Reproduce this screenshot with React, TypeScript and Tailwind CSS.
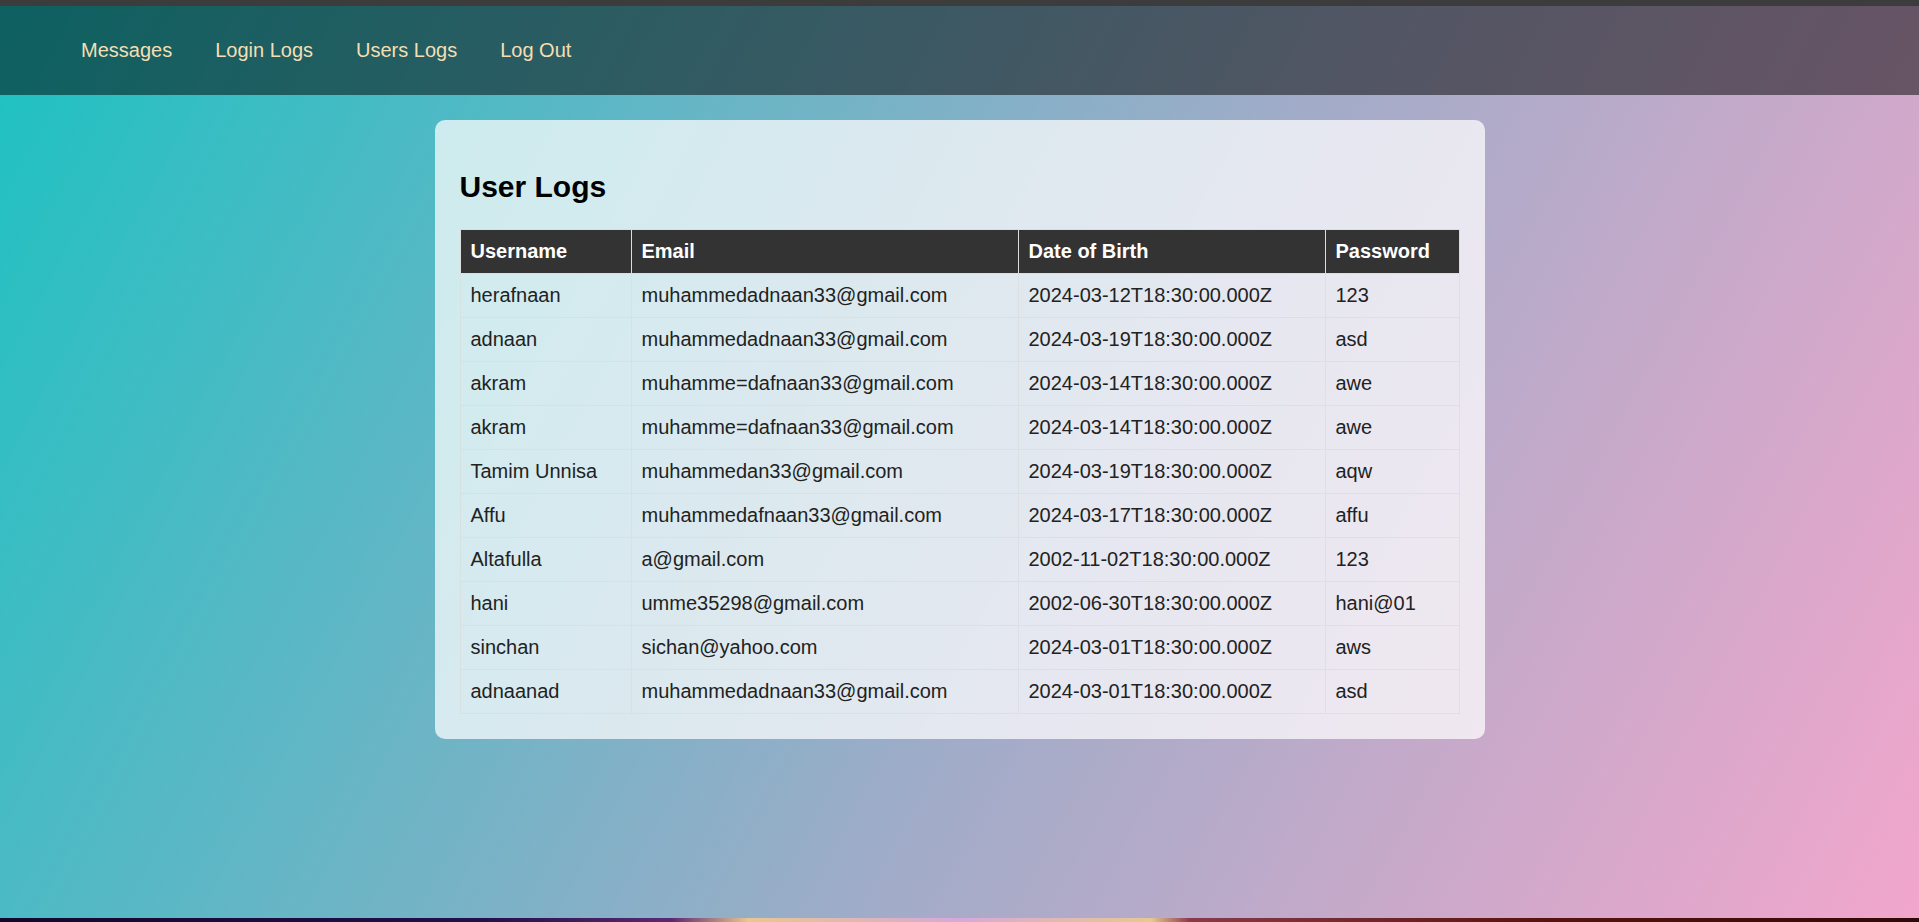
import React from "react";

const rows = [
  ["herafnaan", "muhammedadnaan33@gmail.com", "2024-03-12T18:30:00.000Z", "123"],
  ["adnaan", "muhammedadnaan33@gmail.com", "2024-03-19T18:30:00.000Z", "asd"],
  ["akram", "muhamme=dafnaan33@gmail.com", "2024-03-14T18:30:00.000Z", "awe"],
  ["akram", "muhamme=dafnaan33@gmail.com", "2024-03-14T18:30:00.000Z", "awe"],
  ["Tamim Unnisa", "muhammedan33@gmail.com", "2024-03-19T18:30:00.000Z", "aqw"],
  ["Affu", "muhammedafnaan33@gmail.com", "2024-03-17T18:30:00.000Z", "affu"],
  ["Altafulla", "a@gmail.com", "2002-11-02T18:30:00.000Z", "123"],
  ["hani", "umme35298@gmail.com", "2002-06-30T18:30:00.000Z", "hani@01"],
  ["sinchan", "sichan@yahoo.com", "2024-03-01T18:30:00.000Z", "aws"],
  ["adnaanad", "muhammedadnaan33@gmail.com", "2024-03-01T18:30:00.000Z", "asd"],
];

export default function App() {
  return (
    <div
      className="w-[1919px] h-[922px] flex flex-col overflow-hidden"
      style={{ fontFamily: '"Liberation Sans", Arial, sans-serif' }}
    >
      <div className="h-[6px] bg-[#3c3c3c] shrink-0" />
      <div className="flex-1 flex flex-col bg-[linear-gradient(118deg,#1cc2c2_0%,#9eacc8_55%,#f2a6cc_100%)]">
        <nav className="h-[89px] bg-black/50 flex items-center pl-[81px] gap-[43px] shrink-0">
          {["Messages", "Login Logs", "Users Logs", "Log Out"].map((l) => (
            <a key={l} className="text-[20px] leading-[23px] text-[#f5deb3] cursor-pointer">
              {l}
            </a>
          ))}
        </nav>
        <div className="flex justify-center pt-[25px]">
          <div className="w-[1050px] rounded-[10px] bg-white/[0.72] p-[25px]">
            <h2 className="text-[30px] leading-[34px] font-bold text-black my-[25px]">User Logs</h2>
            <table className="w-full border-collapse text-[20px] leading-[23px]">
              <thead>
                <tr className="bg-[#333333] text-white">
                  <th className="w-[171px] text-left font-bold px-[10px] py-[10px] border border-[#dddddd]">Username</th>
                  <th className="w-[387px] text-left font-bold px-[10px] py-[10px] border border-[#dddddd]">Email</th>
                  <th className="w-[307px] text-left font-bold px-[10px] py-[10px] border border-[#dddddd]">Date of Birth</th>
                  <th className="text-left font-bold px-[10px] py-[10px] border border-[#dddddd]">Password</th>
                </tr>
              </thead>
              <tbody className="text-[#222222]">
                {rows.map((r, i) => (
                  <tr key={i}>
                    {r.map((c, j) => (
                      <td key={j} className="px-[10px] py-[10px] border border-[#dcdcdc]/70 whitespace-nowrap">
                        {c}
                      </td>
                    ))}
                  </tr>
                ))}
              </tbody>
            </table>
          </div>
        </div>
      </div>
      <div className="h-[4px] shrink-0 bg-[linear-gradient(90deg,#12082c_0%,#22104a_25%,#5a2a70_35%,#e6c890_39%,#d8a8d8_50%,#e8c890_60%,#8a3a4a_62%,#5a1410_80%,#300808_100%)]" />
    </div>
  );
}
